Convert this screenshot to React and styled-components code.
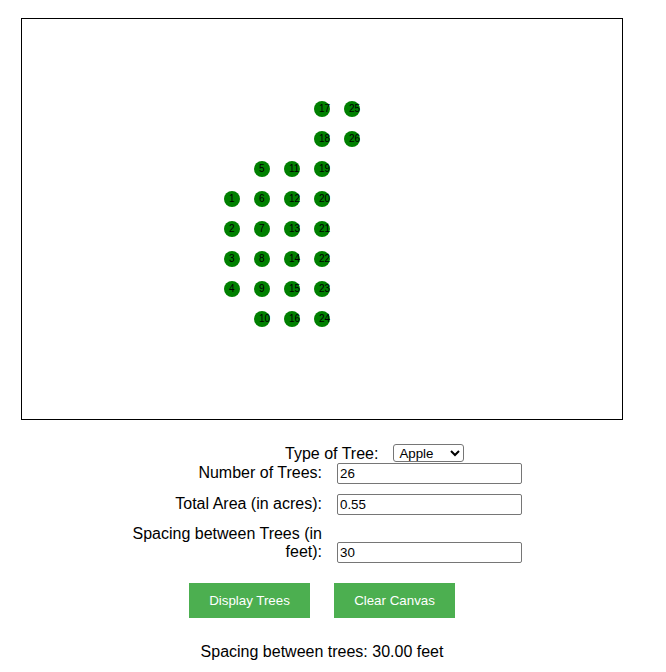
import React from "react";
import styled, { createGlobalStyle } from "styled-components";

const GlobalStyle = createGlobalStyle`
  body {
    margin: 0;
    background: #ffffff;
    font-family: "Liberation Sans", Arial, sans-serif;
    font-size: 16px;
    color: #000000;
  }
`;

const Page = styled.div`
  width: 643px;
  padding-top: 18px;
`;

const Canvas = styled.div`
  margin-left: 21px;
  width: 600px;
  height: 400px;
  border: 1px solid #000000;
  background: #ffffff;
  svg {
    display: block;
  }
`;

const TypeRow = styled.div`
  margin-top: 24px;
  height: 19px;
  display: flex;
  align-items: center;
  padding-left: 285px;
`;

const TypeLabel = styled.label`
  margin-right: 15px;
  line-height: 18px;
`;

const Select = styled.select`
  width: 71px;
  height: 18px;
  font-family: "Liberation Sans", Arial, sans-serif;
  font-size: 13.33px;
  border: 1px solid #767676;
  border-radius: 3px;
  background: #ffffff;
  padding: 0 0 0 1px;
  margin-top: -1px;
`;

const FieldRow = styled.div`
  display: flex;
  align-items: last baseline;
  margin-bottom: 10px;
`;

const FieldLabel = styled.label`
  width: 200px;
  margin-left: 122px;
  margin-right: 15px;
  text-align: right;
  line-height: 18px;
`;

const Input = styled.input`
  box-sizing: border-box;
  width: 185px;
  height: 21px;
  padding: 1px 2px;
  border: 1px solid #767676;
  border-radius: 2px;
  font-family: "Liberation Sans", Arial, sans-serif;
  font-size: 13.33px;
`;

const Buttons = styled.div`
  display: flex;
  justify-content: center;
  gap: 24px;
  margin-top: 20px;
  padding-left: 1px;
`;

const Button = styled.button`
  width: 121px;
  background: #4caf50;
  color: #ffffff;
  border: none;
  padding: 10px 0;
  font-family: "Liberation Sans", Arial, sans-serif;
  font-size: 13.33px;
  line-height: 15px;
  cursor: pointer;
`;

const Result = styled.p`
  margin: 25px 0 0;
  padding-left: 1px;
  text-align: center;
  line-height: 18px;
`;

const columns = [
  { start: 3, count: 4 },
  { start: 2, count: 6 },
  { start: 2, count: 6 },
  { start: 0, count: 8 },
  { start: 0, count: 2 },
];

const trees = [];
let n = 1;
columns.forEach((col, ci) => {
  for (let r = 0; r < col.count; r++) {
    trees.push({ x: 210 + ci * 30, y: 90 + (col.start + r) * 30, n: n++ });
  }
});

const App = () => {
  return (
    <Page>
      <GlobalStyle />
      <Canvas>
        <svg width="600" height="400" viewBox="0 0 600 400">
          {trees.map((t) => (
            <g key={t.n}>
              <circle cx={t.x} cy={t.y} r="8" fill="#008000" />
              <text
                x={t.x - 3}
                y={t.y + 3}
                fontSize="10"
                fontFamily="Liberation Sans, Arial, sans-serif"
                fill="#000000"
              >
                {t.n}
              </text>
            </g>
          ))}
        </svg>
      </Canvas>
      <TypeRow>
        <TypeLabel>Type of Tree:</TypeLabel>
        <Select defaultValue="apple">
          <option value="apple">Apple</option>
          <option value="orange">Orange</option>
          <option value="peach">Peach</option>
        </Select>
      </TypeRow>
      <FieldRow>
        <FieldLabel>Number of Trees:</FieldLabel>
        <Input type="text" defaultValue="26" />
      </FieldRow>
      <FieldRow>
        <FieldLabel>Total Area (in acres):</FieldLabel>
        <Input type="text" defaultValue="0.55" />
      </FieldRow>
      <FieldRow>
        <FieldLabel>Spacing between Trees (in feet):</FieldLabel>
        <Input type="text" defaultValue="30" />
      </FieldRow>
      <Buttons>
        <Button>Display Trees</Button>
        <Button>Clear Canvas</Button>
      </Buttons>
      <Result>Spacing between trees: 30.00 feet</Result>
    </Page>
  );
};

export default App;
